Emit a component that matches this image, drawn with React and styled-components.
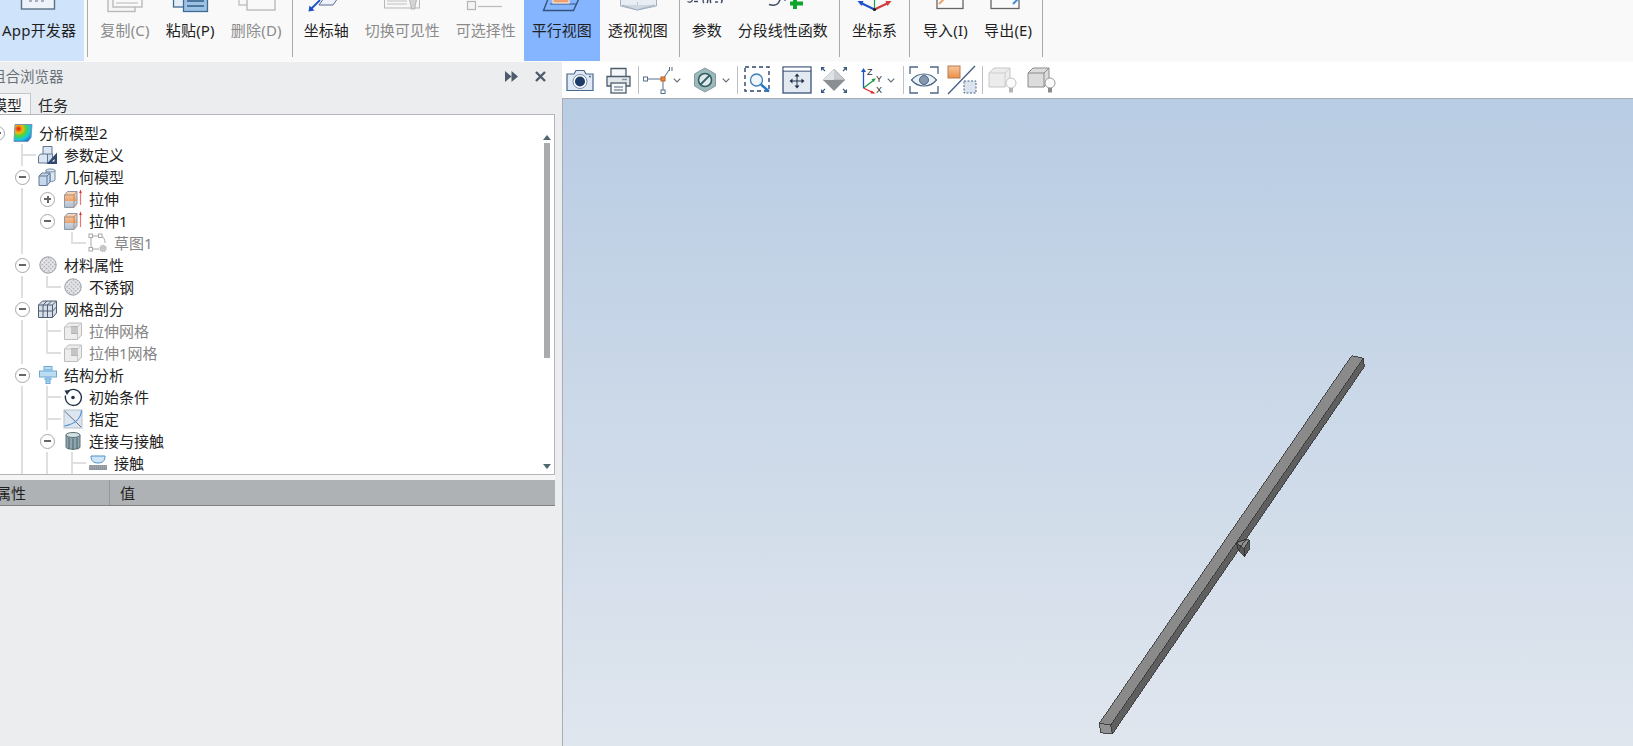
import React from "react";
import styled, { createGlobalStyle } from "styled-components";

const GlobalStyle = createGlobalStyle`
  html, body { margin: 0; padding: 0; overflow: hidden; background: #ecedef; }
  body { font-family: "Noto Sans", "Noto Sans CJK SC", sans-serif; }
`;

const Page = styled.div`
  width: 1633px;
  height: 746px;
  display: flex;
  flex-direction: column;
  overflow: hidden;
  color: #222;
`;

/* ---------- ribbon ---------- */
const Ribbon = styled.div`
  height: 61px;
  flex: none;
  display: flex;
  background: #f9f9f9;
  border-bottom: 1px solid #fbfbfb;
  overflow: hidden;
`;
const RibbonBtn = styled.div`
  flex: none;
  height: 61px;
  padding: 0 8px;
  margin-left: ${(p) => p.$ml || 0}px;
  display: flex;
  flex-direction: column;
  align-items: center;
  background: ${(p) => (p.$bg === "active" ? "#85b5ff" : p.$bg === "soft" ? "#cfe3fb" : "transparent")};
  color: ${(p) => (p.$off ? "#8b8b8b" : "#1f1f1f")};
  svg { display: block; flex: none; margin: 0 -24px; }
`;
const RibbonLabel = styled.span`
  font-size: 15px;
  line-height: 20px;
  margin-top: 7px;
  white-space: nowrap;
  letter-spacing: ${(p) => (p.$latin ? 0.2 : 0)}px;
`;
const RibbonSep = styled.div`
  flex: none;
  width: 1px;
  height: 57px;
  margin: 0 ${(p) => p.$r}px 0 ${(p) => p.$l}px;
  background: #a9a9a9;
`;

const Clip = ({ children }) => (
  <svg width="48" height="13" viewBox="0 0 48 13">{children}</svg>
);

const ribbonIcons = {
  app: (
    <>
      <rect x="6.5" y="-6" width="33" height="15" fill="#eef3fa" stroke="#5d6f85" strokeWidth="1.4" />
      <path d="M14 1h3M20 1h3M26 1h3" stroke="#5d6f85" strokeWidth="1.2" />
    </>
  ),
  copy: (
    <>
      <rect x="7" y="-6" width="27" height="17.5" fill="#f6f6f6" stroke="#b9b9b9" strokeWidth="1.4" />
      <rect x="12" y="-6" width="29" height="13" fill="#f9f9f9" stroke="#b9b9b9" strokeWidth="1.4" />
      <path d="M15 3h22" stroke="#c9c9c9" strokeWidth="1.4" />
    </>
  ),
  paste: (
    <>
      <rect x="7.5" y="-6" width="26" height="13" fill="#e4edf6" stroke="#3f6a95" strokeWidth="1.3" />
      <rect x="17.5" y="-6" width="24" height="17.5" fill="#9cc1e2" stroke="#3f6a95" strokeWidth="1.3" />
      <path d="M21 1h17M21 6h17" stroke="#2f5d8a" strokeWidth="1.5" />
    </>
  ),
  remove: (
    <>
      <rect x="7" y="-6" width="28" height="11" fill="#f8f8f8" stroke="#bdbdbd" strokeWidth="1.3" />
      <rect x="15" y="-2" width="28" height="12" fill="#f9f9f9" stroke="#b5b5b5" strokeWidth="1.3" />
    </>
  ),
  axis: (
    <>
      <path d="M17 5h14l5-7H22z" fill="#eef2f8" stroke="#5a6f92" strokeWidth="1" />
      <path d="M18 0L9 9" stroke="#1c4fc4" strokeWidth="1.8" />
      <path d="M6.5 11.5l1-6 5 5z" fill="#1c4fc4" />
    </>
  ),
  visible: (
    <>
      <rect x="6.5" y="-5" width="35" height="13" fill="#f7f7f7" stroke="#b8b8b8" strokeWidth="1" />
      <path d="M9 1h20M9 4h20" stroke="#c2c2c2" strokeWidth="1.2" />
      <path d="M31 -2h8l-2 8v3h-4v-3z" fill="#d5d5d5" stroke="#a8a8a8" strokeWidth=".8" />
    </>
  ),
  pick: (
    <>
      <rect x="5.5" y="1.5" width="8" height="8" fill="#f4f4f4" stroke="#b4b4b4" strokeWidth="1.2" />
      <path d="M16 6.5h24" stroke="#bdbdbd" strokeWidth="1.3" />
    </>
  ),
  parallel: (
    <>
      <path d="M12 -6L5.5 10.5h30L43 -6z" fill="none" stroke="#33537a" strokeWidth="1.4" />
      <path d="M12 4h27" stroke="#33537a" strokeWidth="1" />
      <rect x="15" y="-5" width="16" height="8" fill="#f0a16c" stroke="#f7e5d8" strokeWidth="1.2" />
    </>
  ),
  perspective: (
    <>
      <path d="M6.5 -4v10l17 4 19-4V-4z" fill="#e8edf3" stroke="#a3b1c2" strokeWidth="1" />
      <path d="M23.5 2v8" stroke="#bcc7d3" strokeWidth="1" />
      <path d="M8 5l15 5 18-5" fill="#cfd8e2" stroke="#97a7b9" strokeWidth=".8" />
    </>
  ),
  param: (
    <g stroke="#3a4a60" strokeWidth="1.4" fill="none">
      <path d="M4.5 1.5c2 1.2 4 .8 5-1.5" />
      <path d="M11 1.5h4" />
      <path d="M21 -1c-1.5 2-1.5 2.5 0 4M24 -1c1 1.2 1 2.5 0 4M28 -1c-1 1.5-1 2.5 0 4M38 -1c1.5 1.5 1.5 2.5 0 4" />
      <path d="M32 2h3" />
    </g>
  ),
  func: (
    <>
      <path d="M22 -5c-1 8-4 12-12 9.5" fill="none" stroke="#3b4a62" strokeWidth="1.5" />
      <path d="M26 -1v2" stroke="#3b4a62" strokeWidth="1.2" />
      <path d="M36 -3v12M31 3.5h13" stroke="#0ea52c" strokeWidth="4" />
    </>
  ),
  coord: (
    <>
      <path d="M24.5 -4v12" stroke="#1fa34a" strokeWidth="1.2" />
      <path d="M24.5 9.5L11 3" stroke="#1d51cf" strokeWidth="2" />
      <path d="M24.5 9.5L38 3" stroke="#d43b3b" strokeWidth="2" />
      <path d="M7.5 1l6 0-2 5z" fill="#1d51cf" />
      <path d="M41.5 1l-6 0 2 5z" fill="#d43b3b" />
      <circle cx="24.5" cy="9.5" r="1.6" fill="#222" />
    </>
  ),
  importIn: (
    <>
      <rect x="16" y="-6" width="26" height="14.5" fill="#fafafa" stroke="#666" strokeWidth="1.3" />
      <path d="M18 -1h5l2 -5h-7z" fill="#eda26a" />
      <path d="M18 4l6 -6" stroke="#eda26a" strokeWidth="2" />
    </>
  ),
  exportOut: (
    <>
      <rect x="7" y="-6" width="28" height="14.5" fill="#fafafa" stroke="#666" strokeWidth="1.3" />
      <path d="M29 4l7 -7" stroke="#3d8edb" strokeWidth="2" />
    </>
  ),
};

/* ---------- main area ---------- */
const Main = styled.div`
  flex: 1;
  min-height: 0;
  display: flex;
`;
const Sidebar = styled.div`
  flex: none;
  width: 555px;
  display: flex;
  flex-direction: column;
  overflow: hidden;
  background: #ecedef;
`;
const Splitter = styled.div`
  flex: none;
  width: 7px;
  background: #ecedef;
`;
const TitleBar = styled.div`
  flex: none;
  height: 30px;
  display: flex;
  align-items: center;
  margin-left: -9px;
  font-size: 14.5px;
  color: #68707a;
`;
const TitleText = styled.span`
  margin-top: -3px;
`;
const TitleTools = styled.div`
  margin-left: auto;
  display: flex;
  align-items: center;
  gap: 17px;
  padding-right: 9px;
  margin-top: -1px;
  svg { display: block; }
`;
const Tabs = styled.div`
  flex: none;
  height: 22px;
  display: flex;
  align-items: flex-end;
  font-size: 15px;
`;
const Tab = styled.div`
  height: 20px;
  line-height: 22px;
  padding: 0 8px 0 ${(p) => (p.$active ? 0 : 7)}px;
  margin-left: ${(p) => (p.$active ? -8 : 0)}px;
  background: ${(p) => (p.$active ? "#f7f7f8" : "transparent")};
  border: ${(p) => (p.$active ? "1px solid #c3c6ca" : "none")};
  border-bottom: none;
  border-left: none;
  color: #2a2a2a;
`;
const TreeBox = styled.div`
  flex: none;
  height: 361px;
  box-sizing: border-box;
  background: #fff;
  border: 1px solid #b3b5b8;
  border-left: none;
  display: flex;
  overflow: hidden;
`;
const Tree = styled.div`
  flex: 1;
  min-width: 0;
  padding-top: 7px;
  margin-left: -15px;
`;
const Row = styled.div`
  height: 22px;
  display: flex;
  align-items: center;
`;
const Cell = styled.div`
  position: relative;
  flex: none;
  width: 25px;
  height: 22px;
  display: flex;
  align-items: center;
  justify-content: center;
  svg { display: block; flex: none; }
  &::before {
    content: ${(p) => (p.$kind === "pipe" || p.$kind === "tee" || p.$kind === "elbow" ? '""' : "none")};
    position: absolute;
    left: 11px;
    top: 0;
    width: 2px;
    height: ${(p) => (p.$kind === "elbow" ? 12 : 22)}px;
    background: #dedfe0;
  }
  &::after {
    content: ${(p) => (p.$kind === "tee" || p.$kind === "elbow" ? '""' : "none")};
    position: absolute;
    left: 11px;
    top: 10px;
    width: 15px;
    height: 2px;
    background: #dedfe0;
  }
`;
const Toggle = styled.span`
  position: relative;
  width: 13px;
  height: 13px;
  border: 1px solid #a6a8ab;
  border-radius: 50%;
  background: #fff;
  &::before {
    content: "";
    position: absolute;
    left: 3px;
    top: 5.5px;
    width: 7px;
    height: 2px;
    background: #666;
  }
  &::after {
    content: ${(p) => (p.$plus ? '""' : "none")};
    position: absolute;
    left: 5.5px;
    top: 3px;
    width: 2px;
    height: 7px;
    background: #666;
  }
`;
const RowText = styled.span`
  margin-left: 4px;
  font-size: 15px;
  line-height: 22px;
  white-space: nowrap;
  color: ${(p) => (p.$off ? "#858585" : "#222")};
`;
const ScrollTrack = styled.div`
  flex: none;
  width: 14px;
  padding: 20px 0 5px;
  display: flex;
  flex-direction: column;
  align-items: center;
  box-sizing: border-box;
`;
const ScrollThumb = styled.div`
  width: 6px;
  height: 215px;
  margin-top: 3px;
  background: #a9abad;
`;
const Arrow = styled.span`
  width: 0;
  height: 0;
  border-left: 4.5px solid transparent;
  border-right: 4.5px solid transparent;
  ${(p) => (p.$down ? "border-top: 5px solid #4f6770; margin-top: auto;" : "border-bottom: 5px solid #4f6770;")}
`;
const Gap = styled.div`
  flex: none;
  height: 5px;
  background: #f5f5f6;
`;
const PropHead = styled.div`
  flex: none;
  height: 26px;
  box-sizing: border-box;
  display: flex;
  background: #aeb2b5;
  border-bottom: 1px solid #7f8386;
  font-size: 15px;
  line-height: 27px;
  color: #1f1f1f;
`;
const PropCell = styled.div`
  box-sizing: border-box;
  width: ${(p) => p.$w}px;
  flex: none;
  text-indent: ${(p) => p.$indent}px;
  border-right: ${(p) => (p.$line ? "1px solid #93979a" : "none")};
`;

const Right = styled.div`
  flex: 1;
  min-width: 0;
  display: flex;
  flex-direction: column;
`;
const Toolbar = styled.div`
  flex: none;
  height: 36px;
  display: flex;
  align-items: center;
  background: #fff;
`;
const Tool = styled.div`
  flex: none;
  margin-left: ${(p) => p.$ml}px;
  width: ${(p) => p.$w}px;
  height: 30px;
  display: flex;
  align-items: center;
  justify-content: center;
  svg { display: block; flex: none; }
`;
const ToolSep = styled.div`
  flex: none;
  width: 1px;
  height: 28px;
  margin-left: ${(p) => p.$ml}px;
  background: #bfc2c5;
`;
const Viewport = styled.div`
  flex: 1;
  min-height: 0;
  border-top: 1px solid #a9adb2;
  border-left: 1px solid #a9adb2;
  background: linear-gradient(to bottom, #b8cce3 0%, #e0e6ee 100%);
  svg { display: block; width: 100%; height: 100%; }
`;

/* ---------- tree icons ---------- */
const treeIcons = {
  model: (
    <svg width="20" height="20" viewBox="0 0 20 20">
      <defs>
        <radialGradient id="heat" cx="25%" cy="25%" r="95%">
          <stop offset="0" stopColor="#e01616" />
          <stop offset=".25" stopColor="#f7b812" />
          <stop offset=".45" stopColor="#49d63c" />
          <stop offset=".68" stopColor="#18c8e0" />
          <stop offset="1" stopColor="#1b4fd8" />
        </radialGradient>
      </defs>
      <path d="M2 1.5h17l-1 13-3 4H1z" fill="url(#heat)" stroke="#7d94ad" strokeWidth="1" />
    </svg>
  ),
  params: (
    <svg width="21" height="20" viewBox="0 0 21 20">
      <path d="M6 1.500h9v8H6z" fill="#dbe6f2" stroke="#5d7691" />
      <path d="M1.500 11.500l2-2.500h7v9h-9z" fill="#dbe6f2" stroke="#5d7691" />
      <path d="M10.500 9h5v9h-5z" fill="#cddcec" stroke="#5d7691" />
      <path d="M20 7.500V19H9.500z" fill="#2f4a6d" />
      <path d="M17.500 14v2.500h-2.500z" fill="#fff" />
    </svg>
  ),
  geometry: (
    <svg width="21" height="20" viewBox="0 0 21 20">
      <path d="M9 3.5c0-2 9-2 9 0v9c0 1.500-3 2-5 2V7H9z" fill="#dbe7f3" stroke="#6d87a3" />
      <path d="M9 3.500c0 2 9 2 9 0" fill="none" stroke="#6d87a3" />
      <path d="M2 9l3-3h8v9l-3 3.500H2z" fill="#c5d8ec" stroke="#5d7691" />
      <path d="M2 9h8v9.500M10 9l3-3" fill="none" stroke="#5d7691" />
    </svg>
  ),
  extrude: (
    <svg width="20" height="20" viewBox="0 0 20 20">
      <defs>
        <linearGradient id="orange" x1="0" y1="0" x2="0" y2="1">
          <stop offset="0" stopColor="#f6ddc8" />
          <stop offset=".6" stopColor="#ee9f62" />
          <stop offset=".62" stopColor="#c9d4e2" />
          <stop offset="1" stopColor="#aebccd" />
        </linearGradient>
      </defs>
      <path d="M1.500 6l3-3.500H14V15l-3 3.500H1.500z" fill="url(#orange)" stroke="#8e98a8" />
      <path d="M1.500 6H11v12.500M11 6l3-3.500" fill="none" stroke="#b98a68" />
      <path d="M17.500 3v13" stroke="#e8777a" strokeWidth="1.200" />
      <path d="M16.200 4l1.300-3.500L18.800 4z" fill="#d92d2d" />
    </svg>
  ),
  sketch: (
    <svg width="20" height="20" viewBox="0 0 20 20" fill="none" stroke="#a8a8a8">
      <path d="M3 3h9c3 0 5 3 5 7M3 3v13h8" strokeWidth="1" />
      <rect x="1" y="1" width="3.500" height="3.500" fill="#fff" />
      <rect x="10.500" y="1" width="3.500" height="3.500" fill="#fff" />
      <rect x="1" y="14.500" width="3.500" height="3.500" fill="#fff" />
      <circle cx="15" cy="15.500" r="3" fill="#c9c9c9" stroke="#bdbdbd" strokeDasharray="1.500 .8" strokeWidth="1.600" />
    </svg>
  ),
  material: (
    <svg width="20" height="20" viewBox="0 0 20 20">
      <defs>
        <pattern id="hatch" width="3" height="3" patternUnits="userSpaceOnUse" patternTransform="rotate(45)">
          <rect width="3" height="3" fill="#e8e8ea" />
          <rect width="1.500" height="1.500" fill="#a3a6ab" />
        </pattern>
      </defs>
      <circle cx="10" cy="10" r="8.200" fill="url(#hatch)" stroke="#9aa0a8" />
    </svg>
  ),
  mesh: (
    <svg width="21" height="20" viewBox="0 0 21 20" fill="none" stroke="#4f5f75" strokeWidth="1">
      <path d="M1.500 6l4-4h14v12l-4 4.500h-14z" fill="#d7dee8" />
      <path d="M1.500 6h14v12.500M15.500 6l4-4M1.500 12h14M6 6v12.500M10.500 6v12.500M6 6l4-4M10.500 6l4-4M15.500 12l4-4" />
    </svg>
  ),
  meshItem: (
    <svg width="20" height="20" viewBox="0 0 20 20">
      <path d="M1.500 6l4-4h13v12l-4 4.500h-13z" fill="#ededed" stroke="#bcbcbc" />
      <path d="M1.500 6h13v12.500M14.500 6l4-4" fill="none" stroke="#c9c9c9" />
      <rect x="8" y="5" width="7" height="8" fill="#b5b5b5" />
      <path d="M8 7h7M8 9h7M8 11h7" stroke="#d5d5d5" />
    </svg>
  ),
  struct: (
    <svg width="20" height="20" viewBox="0 0 20 20" fill="#bcdcf2" stroke="#6aa9d8">
      <rect x="6" y="1.500" width="8" height="3.500" />
      <rect x="1.500" y="6" width="17" height="6" />
      <path d="M7 13h6v2H7z" />
      <rect x="8" y="16" width="4" height="2.500" />
    </svg>
  ),
  init: (
    <svg width="20" height="20" viewBox="0 0 20 20">
      <path d="M5 4.500a8 8 0 1 1-2.400 4" fill="none" stroke="#26344a" strokeWidth="1.400" />
      <path d="M1.500 3.500l6-.5-3.500 5z" fill="#26344a" />
      <circle cx="10" cy="10.500" r="1.800" fill="#26344a" />
    </svg>
  ),
  assign: (
    <svg width="20" height="20" viewBox="0 0 20 20">
      <rect x="1" y="1" width="18" height="18" fill="#dde5ef" stroke="#b4bfcc" />
      <path d="M1.500 2L18 18" stroke="#5c7390" />
      <path d="M18.500 1.500C18 9 12 15 1.500 17" fill="none" stroke="#4f8fd0" strokeWidth="1.200" />
    </svg>
  ),
  group: (
    <svg width="18" height="20" viewBox="0 0 18 20">
      <path d="M2 4v12c0 3 14 3 14 0V4z" fill="#8ea6ad" stroke="#5b7079" />
      <ellipse cx="9" cy="4" rx="7" ry="2.500" fill="#d6dfe2" stroke="#5b7079" />
      <path d="M5 7v11M9 7.500V19M13 7v11" stroke="#4d636d" strokeWidth="1" />
    </svg>
  ),
  contact: (
    <svg width="20" height="20" viewBox="0 0 20 20">
      <path d="M3 3h14c0 5-2.500 7-7 7S3 8 3 3z" fill="#cfe4f6" stroke="#4f90c8" />
      <rect x="1" y="12" width="18" height="5" fill="#8f959c" />
      <path d="M1 13h18M1 15h18" stroke="#b0b5ba" strokeDasharray="1 1" />
    </svg>
  ),
};

const rows = [
  { cells: ["toggle"], icon: "model", text: "分析模型2" },
  { cells: ["", "tee"], icon: "params", text: "参数定义" },
  { cells: ["", "toggle"], icon: "geometry", text: "几何模型" },
  { cells: ["", "pipe", "plus"], icon: "extrude", text: "拉伸" },
  { cells: ["", "pipe", "toggle"], icon: "extrude", text: "拉伸1" },
  { cells: ["", "pipe", "", "elbow"], icon: "sketch", text: "草图1", off: true },
  { cells: ["", "toggle"], icon: "material", text: "材料属性" },
  { cells: ["", "pipe", "elbow"], icon: "material", text: "不锈钢" },
  { cells: ["", "toggle"], icon: "mesh", text: "网格剖分" },
  { cells: ["", "pipe", "tee"], icon: "meshItem", text: "拉伸网格", off: true },
  { cells: ["", "pipe", "elbow"], icon: "meshItem", text: "拉伸1网格", off: true },
  { cells: ["", "toggle"], icon: "struct", text: "结构分析" },
  { cells: ["", "pipe", "tee"], icon: "init", text: "初始条件" },
  { cells: ["", "pipe", "tee"], icon: "assign", text: "指定" },
  { cells: ["", "pipe", "toggle"], icon: "group", text: "连接与接触" },
  { cells: ["", "pipe", "pipe", "tee"], icon: "contact", text: "接触" },
];

const ribbonGroups = [
  { items: [{ icon: "app", label: "App开发器", bg: "soft", ml: -6, latin: true }], sep: { l: 3, r: 4 } },
  {
    items: [
      { icon: "copy", label: "复制(C)", off: true, latin: true },
      { icon: "paste", label: "粘贴(P)", latin: true },
      { icon: "remove", label: "删除(D)", off: true, latin: true },
    ],
    sep: { l: 2, r: 3 },
  },
  {
    items: [
      { icon: "axis", label: "坐标轴" },
      { icon: "visible", label: "切换可见性", off: true },
      { icon: "pick", label: "可选择性", off: true },
      { icon: "parallel", label: "平行视图", bg: "active" },
      { icon: "perspective", label: "透视视图" },
    ],
    sep: { l: 3, r: 4 },
  },
  {
    items: [
      { icon: "param", label: "参数" },
      { icon: "func", label: "分段线性函数" },
    ],
    sep: { l: 3, r: 4 },
  },
  { items: [{ icon: "coord", label: "坐标系" }], sep: { l: 4, r: 5 } },
  {
    items: [
      { icon: "importIn", label: "导入(I)", latin: true },
      { icon: "exportOut", label: "导出(E)", latin: true },
    ],
    sep: { l: 2, r: 4 },
  },
];

/* ---------- toolbar icons ---------- */
const Chevron = () => (
  <svg width="8" height="5" viewBox="0 0 8 5">
    <path d="M.7.700L4 4l3.300-3.300" fill="none" stroke="#5d6b78" strokeWidth="1.100" />
  </svg>
);
const Camera = () => (
  <svg width="28" height="24" viewBox="0 0 28 24">
    <path d="M1 6h7l2-3.500h8L20 6h7v16.500H1z" fill="#dfe8f3" stroke="#46688f" strokeWidth="1.200" />
    <circle cx="14" cy="13.500" r="7" fill="#fff" stroke="#6e8cab" />
    <circle cx="14" cy="13.500" r="5" fill="#1f3c68" />
    <circle cx="24" cy="8.500" r="1" fill="#46688f" />
  </svg>
);
const Printer = () => (
  <svg width="27" height="27" viewBox="0 0 27 27" fill="none" stroke="#4c5c6c" strokeWidth="1.300">
    <path d="M6 10V1.500h15V10" fill="#f6f7f8" />
    <path d="M6 19H2V9.500h23V19h-4" fill="#e5e8eb" />
    <rect x="6" y="16" width="15" height="10" fill="#f6f7f8" />
    <path d="M9 20h9M9 23h9M17 12.500h5" stroke="#8b97a3" />
  </svg>
);
const AxisTool = () => (
  <svg width="30" height="28" viewBox="0 0 30 28">
    <path d="M4 13h17M20 13v11M20 13L26 4" fill="none" stroke="#55708a" strokeWidth="1" />
    <rect x=".5" y="11" width="4" height="4" fill="#fff" stroke="#55708a" />
    <rect x="18" y="24" width="4" height="3.500" fill="#fff" stroke="#55708a" />
    <rect x="18" y="11" width="4" height="4" fill="#ef8a3c" stroke="#b96020" />
    <path d="M26.500 1v4M29 1v4" stroke="#55708a" strokeWidth="1" />
  </svg>
);
const NoHex = () => (
  <svg width="24" height="26" viewBox="0 0 24 26">
    <path d="M12 1l10.500 6v12L12 25 1.500 19V7z" fill="#9fb8b8" stroke="#7e9aa0" />
    <circle cx="12" cy="13" r="6.500" fill="#dfe9ea" stroke="#2f5e66" strokeWidth="1.600" />
    <path d="M7.500 17.500l9-9" stroke="#2f5e66" strokeWidth="1.800" />
  </svg>
);
const ZoomBox = () => (
  <svg width="28" height="28" viewBox="0 0 28 28">
    <rect x="1" y="1" width="24" height="24" fill="none" stroke="#2c4468" strokeWidth="1.400" strokeDasharray="4 3" />
    <circle cx="12.500" cy="14" r="6" fill="#eef5fb" stroke="#3f7fb5" strokeWidth="1.300" />
    <path d="M17 18.500l8 7" stroke="#1f78c8" strokeWidth="2.400" />
  </svg>
);
const FitView = () => (
  <svg width="30" height="28" viewBox="0 0 30 28">
    <rect x="1" y="1" width="28" height="26" fill="#e3e9f1" stroke="#3a5378" strokeWidth="1.300" />
    <path d="M1 5h28" stroke="#3a5378" strokeWidth="1.300" />
    <rect x="1.700" y="1.700" width="26.600" height="2.800" fill="#fff" />
    <path d="M15 9v12M9 15h12" stroke="#1f2f47" strokeWidth="1" />
    <path d="M15 7.500l2.500 3h-5zM15 22.500l2.500-3h-5zM7.500 15l3-2.500v5zM22.500 15l-3-2.500v5z" fill="#1f2f47" />
  </svg>
);
const DiamondFit = () => (
  <svg width="28" height="28" viewBox="0 0 28 28">
    <path d="M14 3l11 11H3z" fill="#c9ccd0" stroke="#9a9ea3" strokeWidth=".7" />
    <path d="M14 25l11-11H3z" fill="#8a8f94" />
    <path d="M14 3L3 14h11z" fill="#dfe2e5" />
    <g stroke="#3a5a80" strokeWidth="1.200">
      <path d="M1.500 1.500l3.500 3.500M26.500 1.500L23 5M1.500 26.500L5 23M26.500 26.500L23 23" />
    </g>
    <path d="M1 1h4L1 5zM27 1h-4l4 4zM1 27v-4l4 4zM27 27v-4l-4 4z" fill="#3a5a80" />
  </svg>
);
const AxesLabel = styled.text`
  font-family: "Liberation Sans", sans-serif;
  font-size: 9px;
  fill: #2a2a2a;
`;
const Axes = () => (
  <svg width="24" height="28" viewBox="0 0 24 28">
    <path d="M3.500 22V5" stroke="#1a55c9" strokeWidth="1.300" />
    <path d="M3.500 2l-2.500 4h5z" fill="#1a55c9" />
    <path d="M3.500 22L14 14" stroke="#1c9c3e" strokeWidth="1.300" />
    <path d="M16 12.500l-4.500.5 2 3z" fill="#1c9c3e" />
    <path d="M3.500 22l10 5" stroke="#e02c2c" strokeWidth="1.300" />
    <path d="M15.500 27.500l-4-3-1 3z" fill="#e02c2c" />
    <AxesLabel x="7" y="9">Z</AxesLabel>
    <AxesLabel x="16" y="16">Y</AxesLabel>
    <AxesLabel x="16" y="27">X</AxesLabel>
  </svg>
);
const EyeBox = () => (
  <svg width="30" height="28" viewBox="0 0 30 28" fill="none">
    <path d="M1 8V1h8M21 1h8v7M1 20v7h8M21 27h8v-7" stroke="#4b6785" strokeWidth="1.300" />
    <path d="M2.500 14C9 6 21 6 27.500 14 21 22 9 22 2.500 14z" fill="#eaf0f6" stroke="#4b6785" strokeWidth="1.200" />
    <circle cx="15" cy="14" r="4.500" fill="#8598ad" stroke="#4b6785" />
  </svg>
);
const BoxLine = () => (
  <svg width="30" height="30" viewBox="0 0 30 30">
    <defs>
      <linearGradient id="boxOrange" x1="0" y1="0" x2="0" y2="1">
        <stop offset="0" stopColor="#f8c79b" />
        <stop offset="1" stopColor="#ec8e4a" />
      </linearGradient>
    </defs>
    <rect x="1" y="1" width="12" height="12" fill="url(#boxOrange)" stroke="#b87b4a" />
    <path d="M1 29L28 1" stroke="#405c84" strokeWidth="1.300" />
    <rect x="17" y="16" width="12" height="12" fill="#dbe3ec" stroke="#46648a" strokeDasharray="2 1.500" />
  </svg>
);
const CubeBulb = ({ dark }) => (
  <svg width="29" height="28" viewBox="0 0 29 28">
    <path
      d="M1 7l5-5h16v13l-5 6H1z"
      fill={dark ? "#dcdcdc" : "#ececec"}
      stroke={dark ? "#8b8b8b" : "#c7c7c7"}
    />
    <path d="M1 7h16v14M17 7l5-5" fill="none" stroke={dark ? "#8b8b8b" : "#cfcfcf"} />
    <circle cx="23" cy="17" r="5" fill="#fbfbfb" stroke={dark ? "#9a9a9a" : "#c3c3c3"} />
    <rect x="21" y="22" width="4" height="4.500" fill={dark ? "#8b8b8b" : "#b5b5b5"} />
  </svg>
);

const tools = [
  { ml: 4, w: 28, el: <Camera /> },
  { ml: 11, w: 27, el: <Printer /> },
  { sep: 6 },
  { ml: 4, w: 30, el: <AxisTool /> },
  { ml: 0, w: 8, el: <Chevron /> },
  { ml: 12, w: 24, el: <NoHex /> },
  { ml: 5, w: 8, el: <Chevron /> },
  { sep: 7 },
  { ml: 6, w: 28, el: <ZoomBox /> },
  { ml: 10, w: 30, el: <FitView /> },
  { ml: 8, w: 28, el: <DiamondFit /> },
  { ml: 12, w: 24, el: <Axes /> },
  { ml: 3, w: 8, el: <Chevron /> },
  { sep: 8 },
  { ml: 5, w: 30, el: <EyeBox /> },
  { ml: 8, w: 30, el: <BoxLine /> },
  { sep: 5 },
  { ml: 5, w: 29, el: <CubeBulb /> },
  { ml: 10, w: 29, el: <CubeBulb dark /> },
];

const Beam = () => (
  <svg viewBox="563 99 1070 647">
    <polygon points="1099.3,723.3 1110.7,725 1363.3,358.3 1351.7,355.7" fill="#8a8a8a" />
    <polygon points="1110.7,725 1112.3,734 1364.3,366.7 1363.3,358.3" fill="#5f5f5f" />
    <polygon points="1099.3,723.3 1110.7,725 1112.3,734 1100.7,732.700" fill="#929292" />
    <polygon points="1236.700,542.300 1246.700,539.300 1249.300,540 1249.300,549.300 1244.300,556.700 1237.300,548.300" fill="#595959" />
    <polygon points="1237,543 1246.700,540 1248.500,541 1244,549" fill="#8c8c8c" />
    <g stroke="#2a2a2a" strokeWidth=".8" fill="none" shapeRendering="crispEdges">
      <polyline points="1100.7,732.700 1099.3,723.3 1351.7,355.7 1363.3,358.3 1364.3,366.7 1112.3,734 1100.7,732.700" />
      <polyline points="1099.3,723.3 1110.7,725 1112.3,734" />
      <line x1="1110.7" y1="725" x2="1363.3" y2="358.3" />
      <polygon points="1236.700,542.300 1246.700,539.300 1249.300,540 1249.300,549.300 1244.300,556.700 1237.300,548.300" />
      <line x1="1237" y1="543" x2="1244" y2="549" />
      <line x1="1244" y1="549" x2="1248.500" y2="541" />
      <line x1="1244" y1="549" x2="1244.300" y2="556.700" />
    </g>
  </svg>
);

const App = () => {
  return (
    <Page>
      <GlobalStyle />
      <Ribbon>
        {ribbonGroups.map((group, gi) => (
          <React.Fragment key={gi}>
            {group.items.map((item) => (
              <RibbonBtn key={item.label} $bg={item.bg} $off={item.off} $ml={item.ml}>
                <Clip>{ribbonIcons[item.icon]}</Clip>
                <RibbonLabel $latin={item.latin}>{item.label}</RibbonLabel>
              </RibbonBtn>
            ))}
            <RibbonSep $l={group.sep.l} $r={group.sep.r} />
          </React.Fragment>
        ))}
      </Ribbon>
      <Main>
        <Sidebar>
          <TitleBar>
            <TitleText>组合浏览器</TitleText>
            <TitleTools>
              <svg width="13" height="11" viewBox="0 0 13 11">
                <path d="M0 0l6.500 5.500L0 11zM6.500 0L13 5.500 6.500 11z" fill="#4d5c6a" />
              </svg>
              <svg width="11" height="11" viewBox="0 0 11 11">
                <path d="M1 1l9 9M10 1l-9 9" stroke="#4d5c6a" strokeWidth="2.400" />
              </svg>
            </TitleTools>
          </TitleBar>
          <Tabs>
            <Tab $active>模型</Tab>
            <Tab>任务</Tab>
          </Tabs>
          <TreeBox>
            <Tree>
              {rows.map((row) => (
                <Row key={row.text}>
                  {row.cells.map((kind, i) => (
                    <Cell key={i} $kind={kind}>
                      {(kind === "toggle" || kind === "plus") && <Toggle $plus={kind === "plus"} />}
                    </Cell>
                  ))}
                  <Cell>{treeIcons[row.icon]}</Cell>
                  <RowText $off={row.off}>{row.text}</RowText>
                </Row>
              ))}
            </Tree>
            <ScrollTrack>
              <Arrow />
              <ScrollThumb />
              <Arrow $down />
            </ScrollTrack>
          </TreeBox>
          <Gap />
          <PropHead>
            <PropCell $w={110} $indent={-4} $line>属性</PropCell>
            <PropCell $w={100} $indent={10}>值</PropCell>
          </PropHead>
        </Sidebar>
        <Splitter />
        <Right>
          <Toolbar>
            {tools.map((t, i) =>
              t.sep ? (
                <ToolSep key={i} $ml={t.sep} />
              ) : (
                <Tool key={i} $ml={t.ml} $w={t.w}>{t.el}</Tool>
              )
            )}
          </Toolbar>
          <Viewport>
            <Beam />
          </Viewport>
        </Right>
      </Main>
    </Page>
  );
};

export default App;
